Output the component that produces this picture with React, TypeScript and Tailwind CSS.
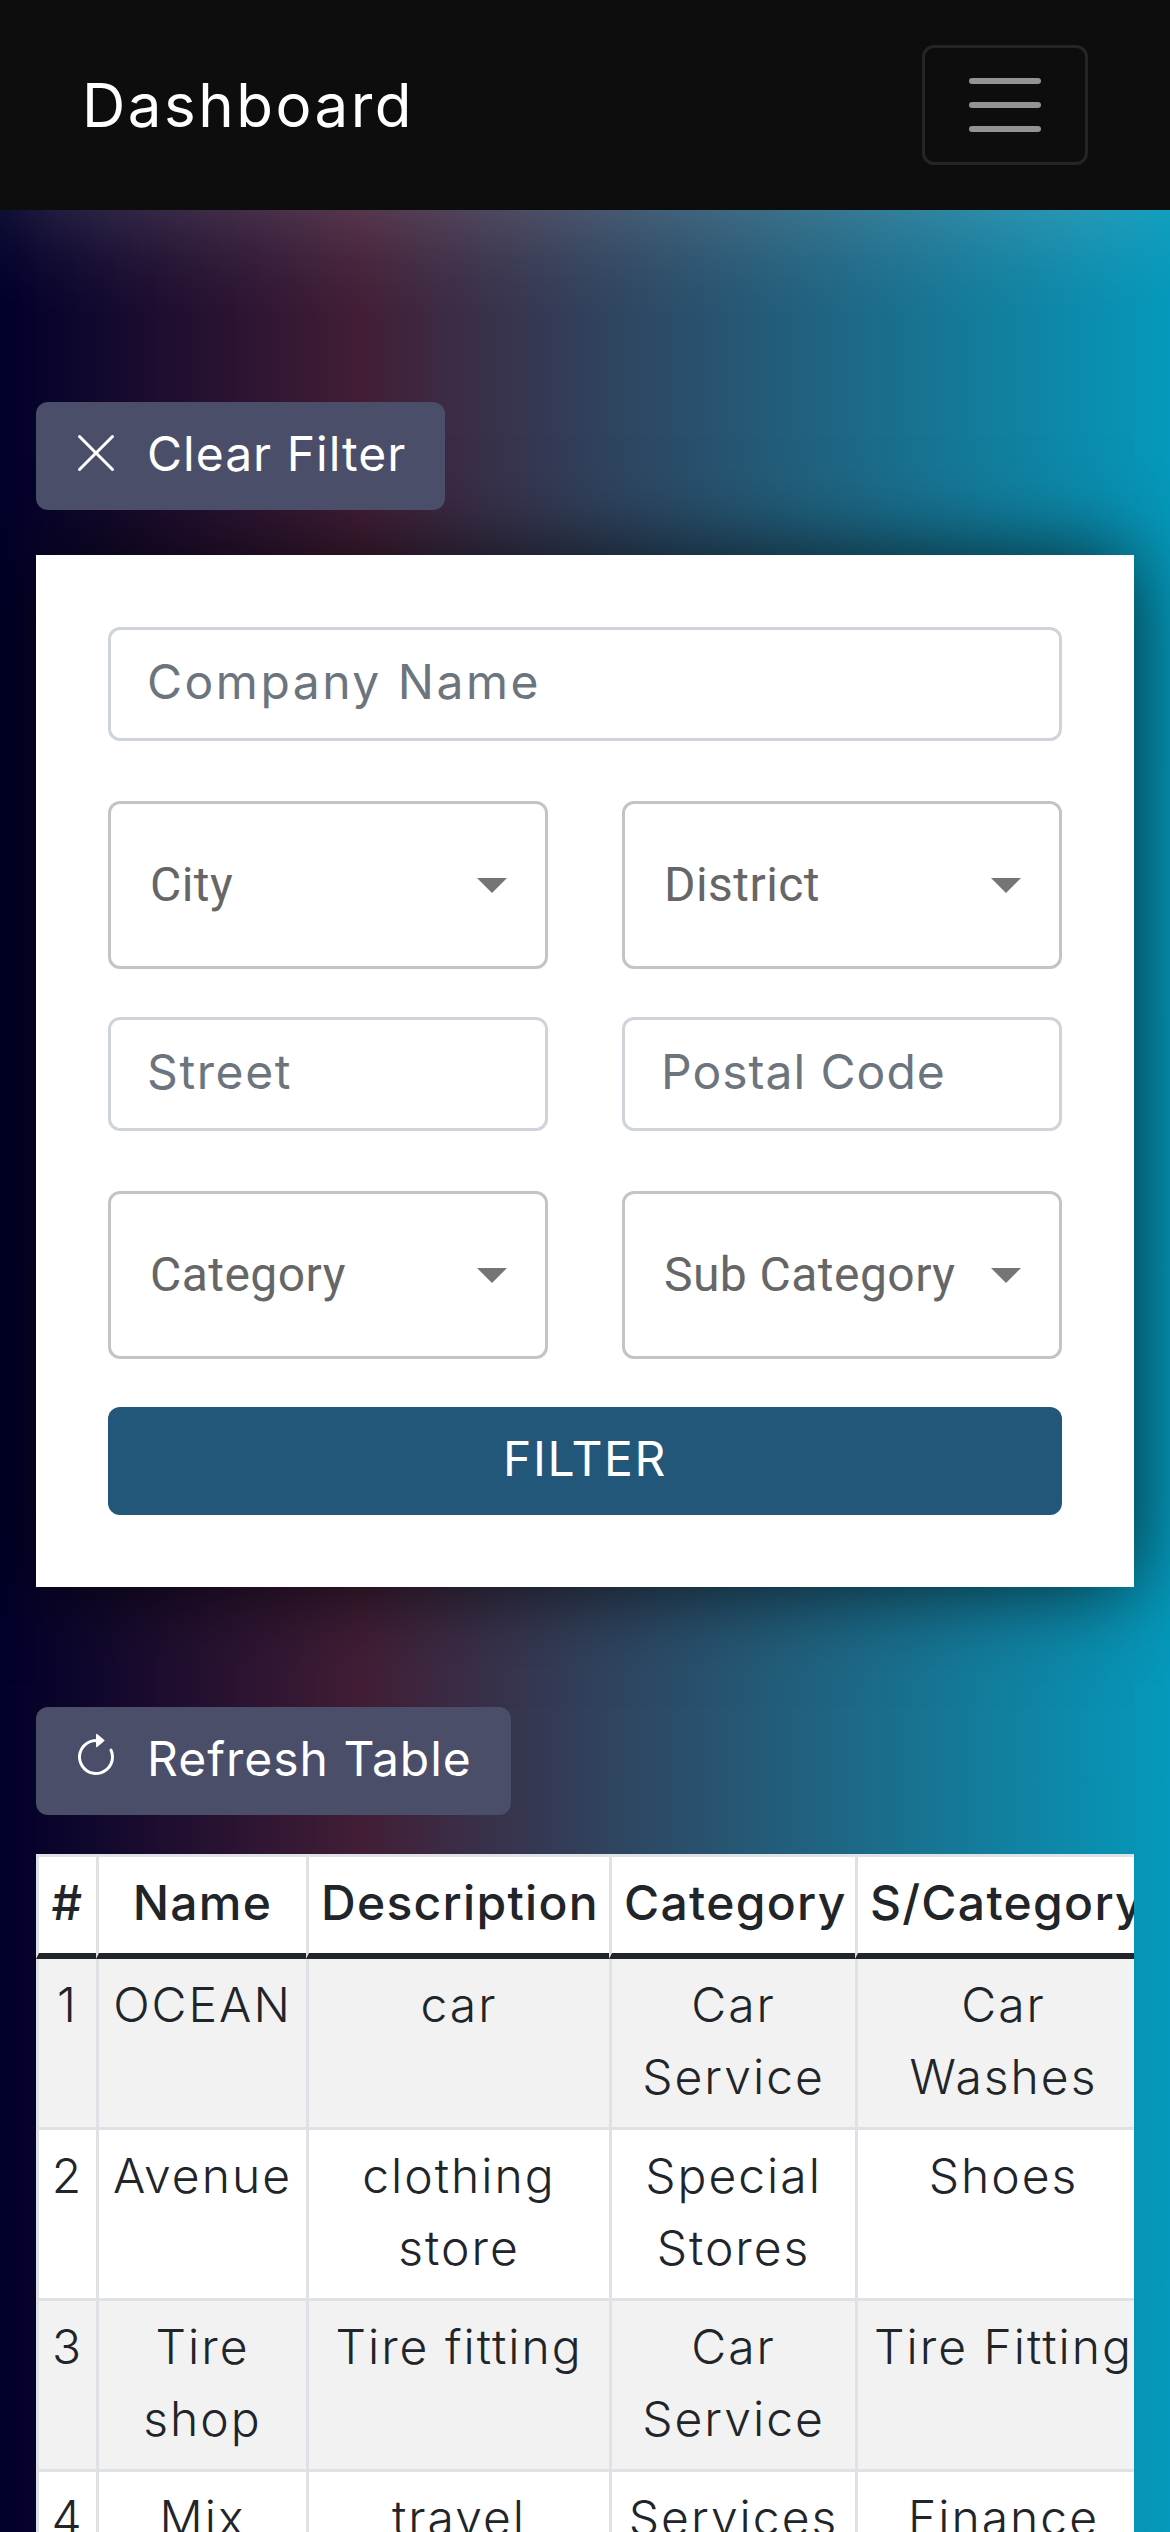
const rows = [
  { id: "1", name: "OCEAN", description: "car", category: "Car Service", sub: "Car Washes" },
  { id: "2", name: "Avenue", description: "clothing store", category: "Special Stores", sub: "Shoes" },
  { id: "3", name: "Tire shop", description: "Tire fitting", category: "Car Service", sub: "Tire Fitting" },
  { id: "4", name: "Mix", description: "travel", category: "Services", sub: "Finance" },
];

function TextField({ placeholder, tracking }: { placeholder: string; tracking: string }) {
  return (
    <input
      placeholder={placeholder}
      className={`block h-[114px] w-full rounded-[12px] border-[3px] border-[#ced4da] bg-white pb-[5px] pl-[36px] pr-[36px] text-[48px] text-[#212529] outline-none placeholder:text-[#6c757d] placeholder:opacity-100 ${tracking}`}
    />
  );
}

function SelectBox({ label }: { label: string }) {
  return (
    <div className="flex h-[168px] items-center justify-between rounded-[12px] border-[3px] border-[#c4c4c4] pl-[39px] pr-[38px] font-['Roboto',sans-serif] text-[48px] tracking-[0.45px] text-[#666666]">
      <span>{label}</span>
      <svg viewBox="0 0 30 15" className="h-[15px] w-[30px] fill-[#757575]">
        <path d="M0 0h30L15 15z" />
      </svg>
    </div>
  );
}

function ActionButton({ icon, label }: { icon: React.ReactNode; label: string }) {
  return (
    <button className="flex h-[108px] items-center gap-[27px] rounded-[12px] bg-[#4a4e69] pl-[36px] pr-[39px] text-[48px] tracking-[1px] text-white">
      {icon}
      <span className="pb-[4px]">{label}</span>
    </button>
  );
}

function HeadCell({ children }: { children: React.ReactNode }) {
  return (
    <th className="border-b-[6px] border-l-[3px] border-t-[3px] border-b-[#212529] border-l-[#dee2e6] border-t-[#dee2e6] pb-[14px] pl-[12px] pr-[12px] pt-[10px] text-center font-medium tracking-[1.3px] text-[#212529]">
      {children}
    </th>
  );
}

function BodyCell({ children, first }: { children: React.ReactNode; first: boolean }) {
  return (
    <td className={first ? "border-l-[3px] border-[#dee2e6] pb-[14px] pl-[12px] pr-[12px] pt-[10px] align-top text-center" : "border-l-[3px] border-t-[3px] border-[#dee2e6] pb-[14px] pl-[12px] pr-[12px] pt-[10px] align-top text-center"}>
      {children}
    </td>
  );
}

export default function App() {
  return (
    <div className="h-[2532px] overflow-hidden bg-[linear-gradient(to_right,#00002a_0%,#421e36_31%,#0599bb_100%)] font-['Inter',sans-serif]">
      <nav className="relative z-10 flex h-[210px] items-center justify-between bg-[#0d0d0d] px-[82px] shadow-[0_0_120px_rgba(255,255,255,0.22)]">
        <span className="text-[60px] tracking-[2.5px] text-white">Dashboard</span>
        <button className="flex h-[120px] w-[166px] items-center justify-center rounded-[12px] border-[3px] border-[#252525]">
          <svg viewBox="0 0 30 30" className="h-[90px] w-[90px] stroke-[#939393]" fill="none" strokeWidth="2" strokeLinecap="round">
            <path d="M4 7h22M4 15h22M4 23h22" />
          </svg>
        </button>
      </nav>

      <main className="px-[36px] pt-[192px]">
        <div className="mb-[45px] flex">
          <ActionButton
            label="Clear Filter"
            icon={
              <svg viewBox="0 0 16 16" className="-mt-[6px] h-[48px] w-[48px] fill-white">
                <path d="M2.146 2.854a.5.5 0 1 1 .708-.708L8 7.293l5.146-5.147a.5.5 0 0 1 .708.708L8.707 8l5.147 5.146a.5.5 0 0 1-.708.708L8 8.707l-5.146 5.147a.5.5 0 0 1-.708-.708L7.293 8 2.146 2.854Z" />
              </svg>
            }
          />
        </div>

        <section className="bg-white p-[72px] shadow-[0_0_80px_rgba(0,0,0,0.72)]">
          <TextField placeholder="Company Name" tracking="tracking-[2.5px]" />
          <div className="mt-[60px] grid grid-cols-2 gap-x-[74px]">
            <SelectBox label="City" />
            <SelectBox label="District" />
          </div>
          <div className="mt-[48px] grid grid-cols-2 gap-x-[74px]">
            <TextField placeholder="Street" tracking="tracking-[1.6px]" />
            <TextField placeholder="Postal Code" tracking="tracking-[1px]" />
          </div>
          <div className="mt-[60px] grid grid-cols-2 gap-x-[74px]">
            <SelectBox label="Category" />
            <SelectBox label="Sub Category" />
          </div>
          <button className="mt-[48px] block h-[108px] w-full rounded-[12px] bg-[#22577a] pb-[4px] text-[48px] tracking-[1.6px] text-white">
            FILTER
          </button>
        </section>

        <div className="mb-[39px] mt-[120px] flex">
          <ActionButton
            label="Refresh Table"
            icon={
              <svg viewBox="0 0 16 16" className="-mt-[8px] h-[48px] w-[48px] fill-white">
                <path fillRule="evenodd" d="M8 3a5 5 0 1 0 4.546 2.914.5.5 0 0 1 .908-.417A6 6 0 1 1 8 2v1z" />
                <path d="M8 4.466V.534a.25.25 0 0 1 .41-.192l2.36 1.966c.12.1.12.284 0 .384L8.41 4.658A.25.25 0 0 1 8 4.466z" />
              </svg>
            }
          />
        </div>

        <div className="overflow-hidden">
          <table className="w-[1113px] table-fixed border-separate border-spacing-0 text-[48px] font-light leading-[72px] tracking-[2px] text-[#212529]">
            <colgroup>
              <col className="w-[60px]" />
              <col className="w-[210px]" />
              <col className="w-[303px]" />
              <col className="w-[246px]" />
              <col className="w-[294px]" />
            </colgroup>
            <thead className="bg-white">
              <tr>
                <HeadCell>#</HeadCell>
                <HeadCell>Name</HeadCell>
                <HeadCell>Description</HeadCell>
                <HeadCell>Category</HeadCell>
                <HeadCell>S/Category</HeadCell>
              </tr>
            </thead>
            <tbody>
              {rows.map((row, i) => (
                <tr key={row.id} className={i % 2 === 0 ? "bg-[#f2f2f2]" : "bg-white"}>
                  <BodyCell first={i === 0}>{row.id}</BodyCell>
                  <BodyCell first={i === 0}>{row.name}</BodyCell>
                  <BodyCell first={i === 0}>{row.description}</BodyCell>
                  <BodyCell first={i === 0}>{row.category}</BodyCell>
                  <BodyCell first={i === 0}>{row.sub}</BodyCell>
                </tr>
              ))}
            </tbody>
          </table>
        </div>
      </main>
    </div>
  );
}
